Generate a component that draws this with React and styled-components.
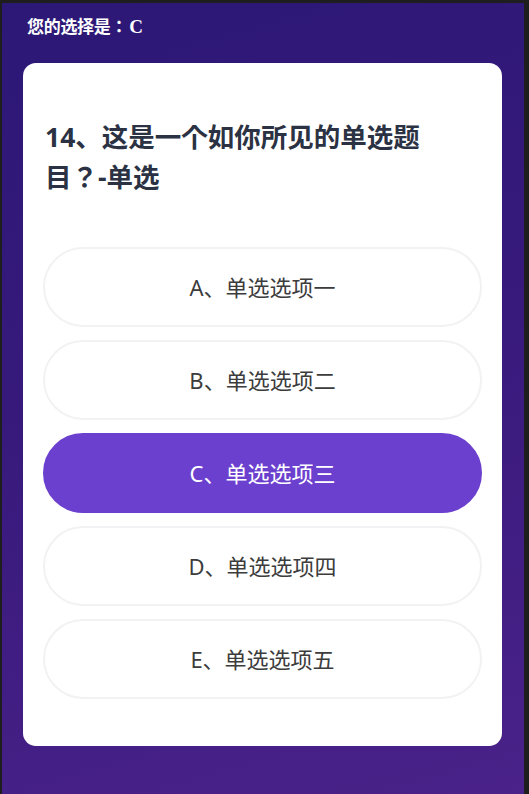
import React from "react";
import styled, { createGlobalStyle } from "styled-components";

const Global = createGlobalStyle`
  html, body { margin: 0; padding: 0; background: #1e1e1e; }
  * { box-sizing: border-box; }
  body { font-family: "Open Sans", "Noto Sans CJK SC", sans-serif; }
`;

const Page = styled.div`
  min-height: 794px;
  border-top: 3px solid #1e1e1e;
  border-left: 2px solid #1e1e1e;
  border-right: 5px solid #1e1e1e;
  background: linear-gradient(165deg, #2c1876 0%, #37197c 45%, #4a2289 100%);
  padding: 0 22px 0 21px;
  display: flex;
  flex-direction: column;
`;

const Header = styled.div`
  height: 60px;
  padding: 11px 0 0 4px;
  color: #ffffff;
  font-size: 17px;
  font-weight: 700;
  line-height: 24px;
  font-family: "Noto Sans CJK JP", sans-serif;
  letter-spacing: -0.3px;
`;

const Grade = styled.span`
  font-family: "Liberation Serif", serif;
  font-size: 19px;
  margin-left: 2px;
`;

const Card = styled.div`
  background: #ffffff;
  border-radius: 13px;
  padding: 54px 20px 47px 20px;
  display: flex;
  flex-direction: column;
`;

const Question = styled.h2`
  margin: 0 0 50px 2px;
  padding-right: 12px;
  font-size: 26.5px;
  font-weight: 700;
  line-height: 40px;
  color: #2b3243;
  font-family: "Open Sans", "Noto Sans CJK JP", sans-serif;
`;

const Options = styled.div`
  display: flex;
  flex-direction: column;
  gap: 13px;
`;

const Option = styled.div`
  height: 80px;
  border-radius: 40px;
  border: 2px solid ${(p) => (p.$selected ? "#6c40ce" : "#f2f2f4")};
  background: ${(p) => (p.$selected ? "#6c40ce" : "#ffffff")};
  color: ${(p) => (p.$selected ? "#ffffff" : "#3c3c3c")};
  display: flex;
  align-items: center;
  justify-content: center;
  font-size: 22px;
  font-weight: 400;
  line-height: 28px;
  font-family: "Noto Sans", "Noto Sans CJK SC", sans-serif;
`;

const options = [
  "A、单选选项一",
  "B、单选选项二",
  "C、单选选项三",
  "D、单选选项四",
  "E、单选选项五",
];

export default function App() {
  return (
    <>
      <Global />
      <Page>
        <Header>
          您的选择是：<Grade>C</Grade>
        </Header>
        <Card>
          <Question>14、这是一个如你所见的单选题目？-单选</Question>
          <Options>
            {options.map((o, i) => (
              <Option key={o} $selected={i === 2}>
                {o}
              </Option>
            ))}
          </Options>
        </Card>
      </Page>
    </>
  );
}
